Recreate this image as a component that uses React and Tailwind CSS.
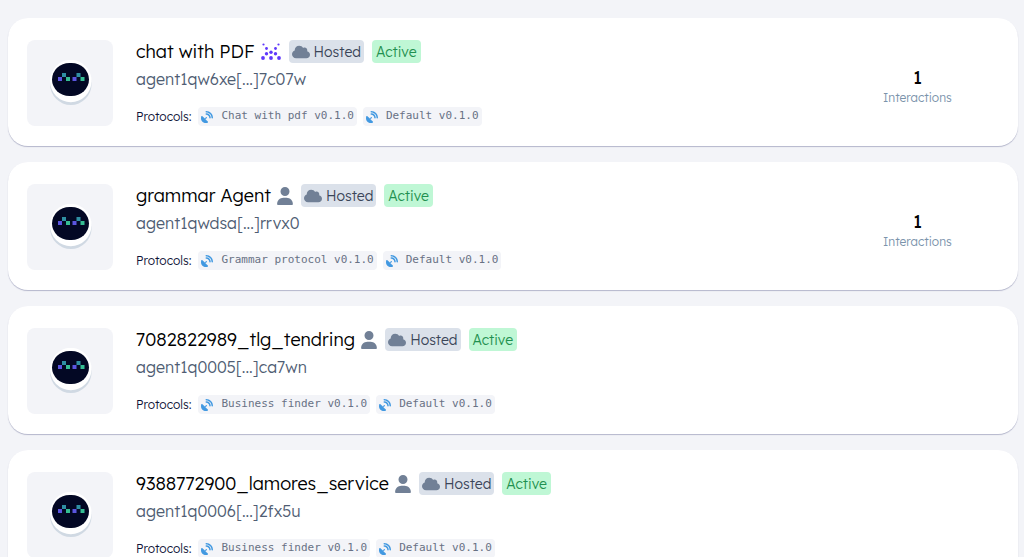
import { FaCloud, FaSatelliteDish, FaUser } from 'react-icons/fa6'

const agents = [
  {
    name: 'chat with PDF',
    address: 'agent1qw6xe[...]7c07w',
    kind: 'fetch',
    protocols: ['Chat with pdf v0.1.0', 'Default v0.1.0'],
    interactions: 1
  },
  {
    name: 'grammar Agent',
    address: 'agent1qwdsa[...]rrvx0',
    kind: 'user',
    protocols: ['Grammar protocol v0.1.0', 'Default v0.1.0'],
    interactions: 1
  },
  {
    name: '7082822989_tlg_tendring',
    address: 'agent1q0005[...]ca7wn',
    kind: 'user',
    protocols: ['Business finder v0.1.0', 'Default v0.1.0']
  },
  {
    name: '9388772900_lamores_service',
    address: 'agent1q0006[...]2fx5u',
    kind: 'user',
    protocols: ['Business finder v0.1.0', 'Default v0.1.0']
  }
]

const Avatar = () => (
  <div className="flex size-[86px] shrink-0 items-center justify-center rounded-lg bg-[#f3f4f8]">
    <svg viewBox="0 0 44 46" className="h-[46px] w-[44px]" aria-hidden="true">
      <ellipse cx="22.8" cy="24" rx="20.8" ry="21" fill="#d0d9e3" />
      <ellipse cx="22.8" cy="21" rx="20.8" ry="21.2" fill="#fff" />
      <rect x="4" y="3" width="37" height="33" rx="17.5" ry="16.5" fill="#030824" />
      {[10, 24.5].map((x) => (
        <g key={x}>
          <rect x={x} y="17" width="4" height="4" fill="#5b55e0" />
          <rect x={x + 4} y="13" width="4" height="4" fill="#2f8fa3" />
          <rect x={x + 8} y="17" width="4" height="4" fill="#35bd93" />
        </g>
      ))}
    </svg>
  </div>
)

// x, y, radius
const dots = [
  [2.5, 1.5, 1.1],
  [17.5, 1.5, 1.1],
  [5.5, 5.5, 1.4],
  [14.5, 5.5, 1.4],
  [10, 9.2, 1.7],
  [5.5, 10.8, 1.7],
  [14.5, 10.8, 1.7],
  [2, 15, 1.9],
  [10, 15, 1.9],
  [18, 15, 1.9]
]

const FetchIcon = () => (
  <svg viewBox="0 0 20 17" className="h-[17px] w-5 shrink-0" fill="#5f38fb" aria-hidden="true">
    {dots.map(([x, y, r]) => (
      <circle key={`${x}-${y}`} cx={x} cy={y} r={r} />
    ))}
  </svg>
)

const AgentCard = ({ agent }) => (
  <article className="flex rounded-[20px] bg-white pt-[22px] pb-5 pl-[19px] shadow-[0_1px_1px_#b4b6cb]">
    <Avatar />
    <div className="ml-[23px] min-w-0 flex-1">
      <div className="flex h-[23px] items-center gap-[6px]">
        <h2 className="text-lg leading-6 font-light text-black">{agent.name}</h2>
        <div className="flex items-center gap-2">
          {agent.kind === 'fetch' ? <FetchIcon /> : <FaUser className="h-[18px] w-4 text-[#718096]" />}
          <span className="flex h-[23px] items-center gap-1 rounded bg-[#dbe1ea] px-[3px] text-sm font-light text-[#3a4558]">
            <FaCloud className="h-4 w-[18px] text-[#718096]" />
            Hosted
          </span>
          <span className="flex h-[23px] items-center rounded bg-[#bff7d5] px-1 text-sm font-light text-[#1f9150]">
            Active
          </span>
        </div>
      </div>
      <p className="mt-1 text-base leading-6 font-light text-[#4f5d73]">{agent.address}</p>
      <div className="mt-4 flex h-[19px] items-center gap-[6px]">
        <span className="mr-px text-xs font-light text-[#0f1438]">Protocols:</span>
        {agent.protocols.map((protocol) => (
          <span
            key={protocol}
            className="flex h-[19px] items-center gap-2 rounded bg-[#f3f4f8] px-[3px] font-['DejaVu_Sans_Mono',monospace] text-[11px] text-[#687184]"
          >
            <FaSatelliteDish className="size-3 text-[#4299e1]" />
            {protocol}
          </span>
        ))}
      </div>
    </div>
    <div className="flex w-1/5 flex-col items-center justify-center pt-[6px] pr-[3px]">
      {agent.interactions && (
        <>
          <span className="text-lg leading-6 text-black">{agent.interactions}</span>
          <span className="text-xs font-light text-[#7b93ab]">Interactions</span>
        </>
      )}
    </div>
  </article>
)

const App = () => (
  <div className="h-screen overflow-hidden bg-[#f3f4f8] font-[Lexend,Inter,sans-serif]">
    <main className="flex flex-col gap-4 pt-[18px] pr-[6px] pl-2">
      {agents.map((agent) => (
        <AgentCard key={agent.name} agent={agent} />
      ))}
    </main>
  </div>
)

export default App
